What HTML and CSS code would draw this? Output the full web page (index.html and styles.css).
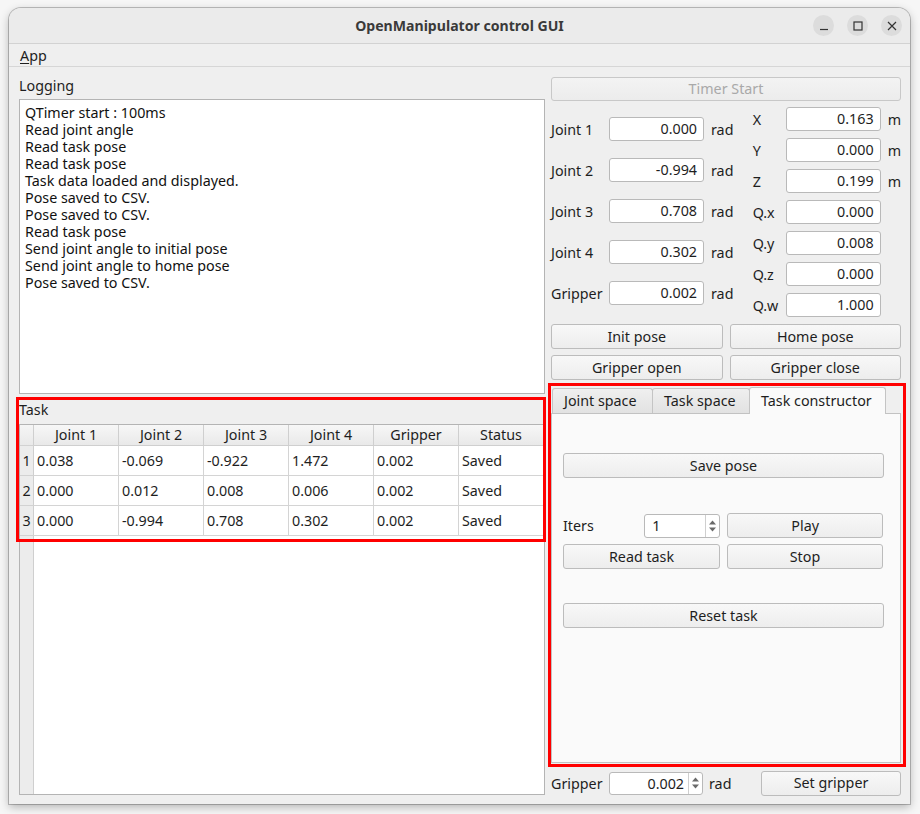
FILE: index.html
```html
<!DOCTYPE html>
<html>
<head>
<meta charset="utf-8">
<link rel="stylesheet" href="styles.css">
</head>
<body>
<div class="window">
  <div class="titlebar">
    <span class="title">OpenManipulator control GUI</span>
    <div class="wbtns">
      <span class="wbtn"><svg width="10" height="10" viewBox="0 0 10 10"><path d="M1 8.5h8" stroke="#333" stroke-width="1.2"/></svg></span>
      <span class="wbtn"><svg width="10" height="10" viewBox="0 0 10 10"><rect x="1" y="1" width="8" height="8" fill="none" stroke="#333" stroke-width="1.2"/></svg></span>
      <span class="wbtn"><svg width="10" height="10" viewBox="0 0 10 10"><path d="M1 1L9 9M9 1L1 9" stroke="#333" stroke-width="1.2"/></svg></span>
    </div>
  </div>
  <div class="menubar"><span class="menu"><u>A</u>pp</span></div>
  <div class="content">
    <div class="left">
      <div class="lbl log-label">Logging</div>
      <div class="logbox">
        <div>QTimer start : 100ms</div>
        <div>Read joint angle</div>
        <div>Read task pose</div>
        <div>Read task pose</div>
        <div>Task data loaded and displayed.</div>
        <div>Pose saved to CSV.</div>
        <div>Pose saved to CSV.</div>
        <div>Read task pose</div>
        <div>Send joint angle to initial pose</div>
        <div>Send joint angle to home pose</div>
        <div>Pose saved to CSV.</div>
      </div>
      <div class="lbl task-label">Task</div>
      <div class="table">
        <div class="trow thead">
          <div class="vh"></div>
          <div class="th">Joint 1</div><div class="th">Joint 2</div><div class="th">Joint 3</div><div class="th">Joint 4</div><div class="th">Gripper</div><div class="th">Status</div>
        </div>
        <div class="trow">
          <div class="vh">1</div>
          <div class="td">0.038</div><div class="td">-0.069</div><div class="td">-0.922</div><div class="td">1.472</div><div class="td">0.002</div><div class="td">Saved</div>
        </div>
        <div class="trow">
          <div class="vh">2</div>
          <div class="td">0.000</div><div class="td">0.012</div><div class="td">0.008</div><div class="td">0.006</div><div class="td">0.002</div><div class="td">Saved</div>
        </div>
        <div class="trow">
          <div class="vh">3</div>
          <div class="td">0.000</div><div class="td">-0.994</div><div class="td">0.708</div><div class="td">0.302</div><div class="td">0.002</div><div class="td">Saved</div>
        </div>
        <div class="tfill"><div class="vh"></div></div>
      </div>
    </div>
    <div class="right">
      <button class="btn disabled timer">Timer Start</button>
      <div class="fields">
        <div class="jcol">
          <div class="frow"><span class="jl">Joint 1</span><span class="inp">0.000</span><span class="unit">rad</span></div>
          <div class="frow"><span class="jl">Joint 2</span><span class="inp">-0.994</span><span class="unit">rad</span></div>
          <div class="frow"><span class="jl">Joint 3</span><span class="inp">0.708</span><span class="unit">rad</span></div>
          <div class="frow"><span class="jl">Joint 4</span><span class="inp">0.302</span><span class="unit">rad</span></div>
          <div class="frow"><span class="jl">Gripper</span><span class="inp">0.002</span><span class="unit">rad</span></div>
        </div>
        <div class="tcol">
          <div class="frow"><span class="tl">X</span><span class="inp">0.163</span><span class="unit">m</span></div>
          <div class="frow"><span class="tl">Y</span><span class="inp">0.000</span><span class="unit">m</span></div>
          <div class="frow"><span class="tl">Z</span><span class="inp">0.199</span><span class="unit">m</span></div>
          <div class="frow"><span class="tl">Q.x</span><span class="inp">0.000</span></div>
          <div class="frow"><span class="tl">Q.y</span><span class="inp">0.008</span></div>
          <div class="frow"><span class="tl">Q.z</span><span class="inp">0.000</span></div>
          <div class="frow"><span class="tl">Q.w</span><span class="inp">1.000</span></div>
        </div>
      </div>
      <div class="brow"><button class="btn">Init pose</button><button class="btn">Home pose</button></div>
      <div class="brow b2"><button class="btn">Gripper open</button><button class="btn">Gripper close</button></div>
      <div class="tabs">
        <div class="tabbar">
          <span class="tab">Joint space</span><span class="tab">Task space</span><span class="tab sel">Task constructor</span>
        </div>
        <div class="pane">
          <button class="btn full save">Save pose</button>
          <div class="prow iters">
            <span class="itl">Iters</span>
            <span class="spin sp-it"><span class="sv left">1</span><span class="arrows"><svg width="9" height="16" viewBox="0 0 9 16"><path d="M1 6.5L4.5 2.5L8 6.5Z M1 9.5L4.5 13.5L8 9.5Z" fill="#6a6a6a"/></svg></span></span>
            <button class="btn play">Play</button>
          </div>
          <div class="prow rr">
            <button class="btn read">Read task</button>
            <button class="btn play">Stop</button>
          </div>
          <button class="btn full reset">Reset task</button>
        </div>
      </div>
      <div class="bottom">
        <span class="jl">Gripper</span>
        <span class="spin sp-g"><span class="sv">0.002</span><span class="arrows"><svg width="9" height="16" viewBox="0 0 9 16"><path d="M1 6.5L4.5 2.5L8 6.5Z M1 9.5L4.5 13.5L8 9.5Z" fill="#6a6a6a"/></svg></span></span>
        <span class="unit">rad</span>
        <button class="btn setg">Set gripper</button>
      </div>
    </div>
  </div>
  <div class="annot annot1"></div>
  <div class="annot annot2"></div>
</div>
</body>
</html>
```

FILE: styles.css
```css
* { box-sizing: border-box; }
html, body { margin: 0; padding: 0; }
body {
  background: #f6f6f6;
  font-family: "Noto Sans", "DejaVu Sans", sans-serif;
  font-size: 14.3px;
  color: #1e1e1e;
  width: 920px;
  height: 814px;
  overflow: hidden;
}
.window {
  position: relative;
  margin: 8px 0 0 9px;
  width: 901px;
  height: 796px;
  background: #efefef;
  border-radius: 12px 12px 0 0;
  box-shadow: 0 0 0 1px rgba(0,0,0,0.22), 0 3px 10px rgba(0,0,0,0.28);
  display: flex;
  flex-direction: column;
}
.titlebar {
  height: 36px;
  flex: none;
  background: #ebebeb;
  border-bottom: 1px solid #d2d2d2;
  border-radius: 12px 12px 0 0;
  display: flex;
  align-items: center;
  justify-content: center;
  position: relative;
}
.title {
  font-weight: bold;
  font-size: 14.1px;
  color: #3a3a3a;
}
.wbtns {
  position: absolute;
  right: 8px;
  top: 7px;
  display: flex;
  gap: 13px;
}
.wbtn {
  width: 21px;
  height: 21px;
  border-radius: 50%;
  background: #dcdcdc;
  display: flex;
  align-items: center;
  justify-content: center;
}
.menubar {
  height: 23px;
  flex: none;
  border-bottom: 1px solid #d6d6d6;
  padding-left: 11px;
  line-height: 23px;
}
.menu u { text-underline-offset: 2px; }
.content {
  flex: 1;
  display: flex;
  gap: 6px;
  padding: 10px 9px 0 10px;
}
.left {
  width: 526px;
  display: flex;
  flex-direction: column;
}
.lbl { line-height: 17px; height: 17px; }
.log-label { margin-bottom: 5px; }
.logbox {
  height: 295px;
  background: #fff;
  border: 1px solid #b4b4b4;
  padding: 4px 5px;
  line-height: 17px;
  color: #111;
}
.task-label { margin-top: 7px; margin-bottom: 6px; }
.table {
  height: 371px;
  background: #fff;
  border: 1px solid #b4b4b4;
  display: flex;
  flex-direction: column;
  width: 526px;
}
.trow { display: flex; height: 30px; }
.thead { height: 21px; }
.vh {
  width: 14px;
  flex: none;
  background: #ececec;
  border-right: 1px solid #cfcfcf;
  border-bottom: 1px solid #d2d2d2;
  text-align: center;
  line-height: 29px;
  color: #1e1e1e;
}
.thead .vh { background: linear-gradient(#f5f5f5, #e9e9e9); line-height: 20px; }
.th {
  width: 85px;
  flex: none;
  text-align: center;
  line-height: 20px;
  background: linear-gradient(#f7f7f7, #e9e9e9);
  border-right: 1px solid #cfcfcf;
  border-bottom: 1px solid #cfcfcf;
}
.td {
  width: 85px;
  flex: none;
  padding-left: 3px;
  line-height: 29px;
  border-right: 1px solid #d4d4d4;
  border-bottom: 1px solid #d4d4d4;
}
.th:last-child, .td:last-child { width: 84px; border-right: none; }
.tfill { flex: 1; display: flex; }
.tfill .vh { border-bottom: none; }
.right {
  width: 350px;
  display: flex;
  flex-direction: column;
}
.btn {
  font-family: inherit;
  font-size: 14.3px;
  color: #1e1e1e;
  height: 25px;
  padding: 0;
  border: 1px solid #bcbcbc;
  border-radius: 3px;
  background: linear-gradient(#f8f8f8, #ededed);
  line-height: 22px;
}
.btn.disabled { color: #a9a9a9; border-color: #c8c8c8; background: linear-gradient(#f3f3f3, #ececec); }
.timer { height: 24px; width: 350px; }
.fields { display: flex; margin-top: 6px; }
.jcol {
  width: 203px;
  padding-top: 10px;
  display: flex;
  flex-direction: column;
  gap: 17px;
}
.tcol {
  display: flex;
  flex-direction: column;
  gap: 7px;
}
.frow { display: flex; align-items: center; height: 24px; }
.jl { width: 58px; flex: none; }
.tl { width: 33px; flex: none; }
.inp {
  width: 95px;
  height: 24px;
  flex: none;
  background: #fff;
  border: 1px solid #b9b9b9;
  border-radius: 3px;
  text-align: right;
  padding-right: 6px;
  line-height: 22px;
}
.unit { margin-left: 7px; }
.brow { display: flex; gap: 7px; margin-top: 7px; }
.brow .btn { flex: 1; }
.brow.b2 { margin-top: 6px; }
.tabs { margin-top: 7px; display: flex; flex-direction: column; }
.tabbar { display: flex; align-items: flex-end; height: 26px; padding-left: 1px; position: relative; z-index: 1; }
.tab {
  height: 25px;
  line-height: 24px;
  padding: 0 11px;
  border: 1px solid #c4c4c4;
  border-bottom: none;
  border-radius: 3px 3px 0 0;
  background: linear-gradient(#efefef, #e2e2e2);
  margin-right: -1px;
}
.tab:nth-child(1) { width: 101px; }
.tab:nth-child(2) { width: 98px; }
.tab.sel {
  width: 137px;
  height: 27px;
  line-height: 26px;
  background: #fafafa;
  margin-bottom: -1px;
  padding: 0 11px;
}
.pane {
  height: 350px;
  background: #fafafa;
  border: 1px solid #c2c2c2;
  padding: 39px 17px 0 11px;
  display: flex;
  flex-direction: column;
}
.full { width: 321px; height: 25px; }
.prow { display: flex; align-items: center; gap: 7px; }
.iters { margin-top: 35px; }
.itl { width: 75px; }
.spin {
  display: flex;
  height: 24px;
  background: #fff;
  border: 1px solid #b9b9b9;
  border-radius: 3px;
  flex: none;
}
.sv { flex: 1; line-height: 22px; text-align: right; padding-right: 4px; }
.sv.left { text-align: left; padding-left: 7px; }
.arrows {
  width: 14px;
  border-left: 1px solid #cfcfcf;
  display: flex;
  align-items: center;
  justify-content: center;
}
.sp-it { width: 76px; }
.play { width: 157px; height: 25px; }
.rr { margin-top: 6px; }
.read { width: 158px; }
.reset { margin-top: 34px; }
.bottom { display: flex; align-items: center; margin-top: 8px; height: 24px; }
.sp-g { width: 94px; height: 23px; }
.bottom .unit { margin-left: 6px; }
.setg { margin-left: auto; width: 140px; height: 25px; }
.annot {
  position: absolute;
  border: 3px solid #ff0000;
  pointer-events: none;
}
.annot1 { left: 7px; top: 389px; width: 530px; height: 145px; }
.annot2 { left: 539px; top: 375px; width: 358px; height: 384px; }
```
